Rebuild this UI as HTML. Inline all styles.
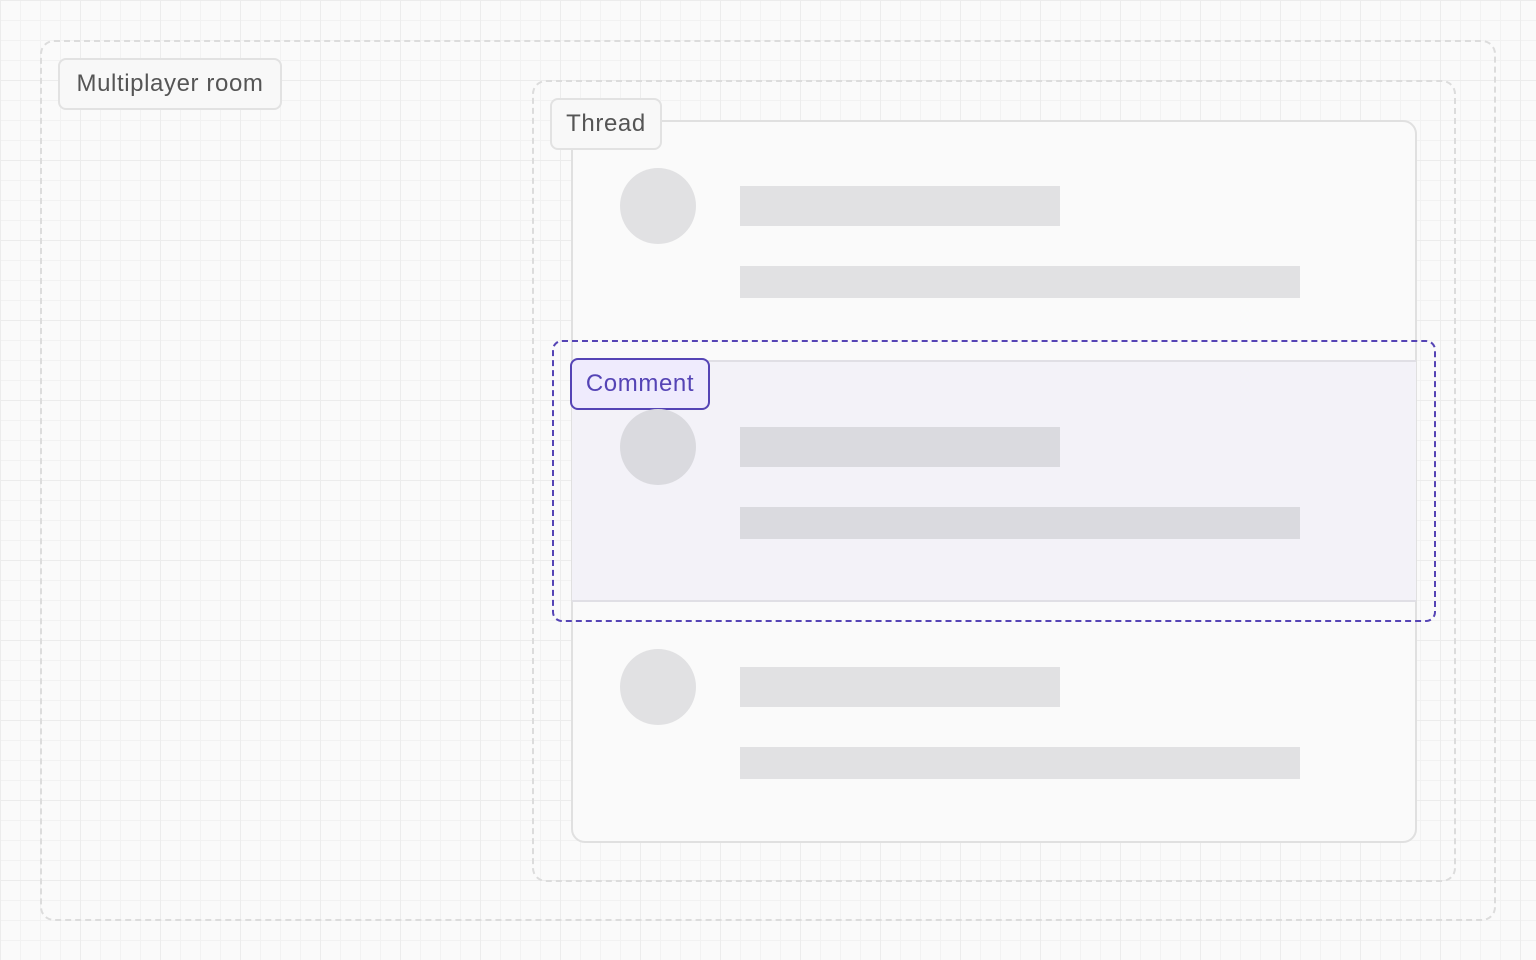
<!DOCTYPE html><html><head><style>
body{margin:0;width:1536px;height:960px;background-color:#fafafa;
background-image:linear-gradient(#ececec 1px,transparent 1px),linear-gradient(90deg,#ececec 1px,transparent 1px),linear-gradient(#f2f2f2 1px,transparent 1px),linear-gradient(90deg,#f2f2f2 1px,transparent 1px);
background-size:80px 80px,80px 80px,20px 20px,20px 20px;background-position:0 0;position:relative;overflow:hidden;font-family:"Liberation Sans",sans-serif}
.a{position:absolute;box-sizing:border-box}
.lbl{border:2px solid #e2e2e2;background:#f8f8f8;border-radius:8px;color:#555;font-size:24px;letter-spacing:0.6px;display:flex;align-items:center;justify-content:center}
.c{border-radius:50%;background:#e1e1e3;width:76px;height:76px}
.b{background:#e1e1e3}
</style></head><body>
<div class="a" style="left:40px;top:40px;width:1456px;height:881px;border:2px dashed #dcdcdc;border-radius:14px"></div>
<div class="a lbl" style="left:58px;top:58px;width:224px;height:52px">Multiplayer room</div>
<div class="a" style="left:532px;top:80px;width:924px;height:802px;border:2px dashed #dcdcdc;border-radius:14px"></div>
<div class="a" style="left:571px;top:120px;width:846px;height:723px;border:2px solid #e0e0e0;border-radius:14px;background:#fafafa"></div>
<div class="a" style="left:572px;top:360px;width:844px;height:242px;background:#f3f2f8;border-top:2px solid #e0dfe5;border-bottom:2px solid #e0dfe5"></div>
<div class="a" style="left:552px;top:340px;width:884px;height:282px;border:2px dashed #5544b5;border-radius:10px"></div>
<div class="a lbl" style="left:550px;top:98px;width:112px;height:52px">Thread</div>
<div class="a lbl" style="left:570px;top:358px;width:140px;height:52px;background:#efebfd;border-color:#5544b5;color:#5544b5">Comment</div>
<div class="a c" style="left:620px;top:168px"></div>
<div class="a b" style="left:740px;top:186px;width:320px;height:40px"></div>
<div class="a b" style="left:740px;top:266px;width:560px;height:32px"></div>
<div class="a c" style="left:620px;top:409px;background:#dadadf"></div>
<div class="a b" style="left:740px;top:427px;width:320px;height:40px;background:#dadadf"></div>
<div class="a b" style="left:740px;top:507px;width:560px;height:32px;background:#dadadf"></div>
<div class="a c" style="left:620px;top:649px"></div>
<div class="a b" style="left:740px;top:667px;width:320px;height:40px"></div>
<div class="a b" style="left:740px;top:747px;width:560px;height:32px"></div>
</body></html>
